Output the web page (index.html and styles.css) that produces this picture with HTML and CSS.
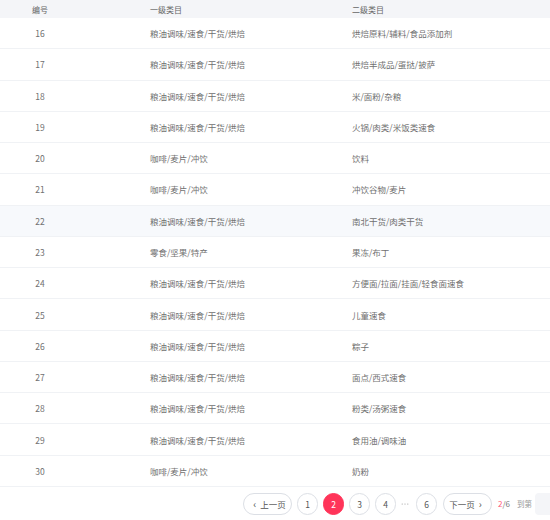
FILE: index.html
```html
<!DOCTYPE html>
<html>
<head>
<meta charset="utf-8">
<link rel="stylesheet" href="styles.css">
</head>
<body>
<div class="table">
  <div class="row head"><div class="c1">编号</div><div class="c2">一级类目</div><div class="c3">二级类目</div></div>
  <div class="row"><div class="c1">16</div><div class="c2">粮油调味/速食/干货/烘焙</div><div class="c3">烘焙原料/辅料/食品添加剂</div></div>
  <div class="row"><div class="c1">17</div><div class="c2">粮油调味/速食/干货/烘焙</div><div class="c3">烘焙半成品/蛋挞/披萨</div></div>
  <div class="row"><div class="c1">18</div><div class="c2">粮油调味/速食/干货/烘焙</div><div class="c3">米/面粉/杂粮</div></div>
  <div class="row"><div class="c1">19</div><div class="c2">粮油调味/速食/干货/烘焙</div><div class="c3">火锅/肉类/米饭类速食</div></div>
  <div class="row"><div class="c1">20</div><div class="c2">咖啡/麦片/冲饮</div><div class="c3">饮料</div></div>
  <div class="row"><div class="c1">21</div><div class="c2">咖啡/麦片/冲饮</div><div class="c3">冲饮谷物/麦片</div></div>
  <div class="row hl"><div class="c1">22</div><div class="c2">粮油调味/速食/干货/烘焙</div><div class="c3">南北干货/肉类干货</div></div>
  <div class="row"><div class="c1">23</div><div class="c2">零食/坚果/特产</div><div class="c3">果冻/布丁</div></div>
  <div class="row"><div class="c1">24</div><div class="c2">粮油调味/速食/干货/烘焙</div><div class="c3">方便面/拉面/挂面/轻食面速食</div></div>
  <div class="row"><div class="c1">25</div><div class="c2">粮油调味/速食/干货/烘焙</div><div class="c3">儿童速食</div></div>
  <div class="row"><div class="c1">26</div><div class="c2">粮油调味/速食/干货/烘焙</div><div class="c3">粽子</div></div>
  <div class="row"><div class="c1">27</div><div class="c2">粮油调味/速食/干货/烘焙</div><div class="c3">面点/西式速食</div></div>
  <div class="row"><div class="c1">28</div><div class="c2">粮油调味/速食/干货/烘焙</div><div class="c3">粉类/汤粥速食</div></div>
  <div class="row"><div class="c1">29</div><div class="c2">粮油调味/速食/干货/烘焙</div><div class="c3">食用油/调味油</div></div>
  <div class="row"><div class="c1">30</div><div class="c2">咖啡/麦片/冲饮</div><div class="c3">奶粉</div></div>
</div>
<div class="pager">
  <div class="btn wide"><span class="arr">‹</span>上一页</div>
  <div class="btn num">1</div>
  <div class="btn num active">2</div>
  <div class="btn num">3</div>
  <div class="btn num">4</div>
  <div class="dots"><svg width="8" height="4" viewBox="0 0 8 4"><circle cx="1.2" cy="2" r="0.6" fill="#999"/><circle cx="4" cy="2" r="0.6" fill="#999"/><circle cx="6.8" cy="2" r="0.6" fill="#999"/></svg></div>
  <div class="btn num">6</div>
  <div class="btn wide">下一页<span class="arr">›</span></div>
  <div class="count"><span class="cur">2</span>/6</div>
  <div class="goto">到第</div>
  <div class="input"></div>
</div>
</body>
</html>
```
FILE: styles.css
```css
html, body {
  margin: 0;
  padding: 0;
  background: #fff;
  width: 550px;
  height: 520px;
  overflow: hidden;
  font-family: "Noto Sans CJK SC", "Noto Sans", sans-serif;
  color: #707070;
}
.table {
  width: 550px;
}
.row {
  display: grid;
  grid-template-columns: 80px 272px 198px;
  height: 31.27px;
  align-items: center;
  font-size: 8.5px;
  border-bottom: 1px solid #f0f2f5;
  box-sizing: border-box;
}
.row.head {
  height: 18px;
  background: #f4f5f8;
  border-bottom: none;
  font-size: 8px;
  color: #666;
}
.row.hl {
  background: #f7f9fc;
}
.c1 {
  text-align: center;
}
.c2 {
  padding-left: 70px;
}
.pager {
  display: flex;
  align-items: center;
  padding: 6px 0 0 243px;
  height: 22px;
  font-size: 8.5px;
  color: #555;
  white-space: nowrap;
}
.btn {
  box-sizing: border-box;
  height: 22px;
  border: 1px solid #dcdfe5;
  border-radius: 11px;
  display: flex;
  align-items: center;
  justify-content: center;
  flex: none;
}
.wide {
  width: 49px;
}
.num {
  width: 21px;
  margin-left: 5px;
}
.num + .wide {
  margin-left: 6px;
}
.active {
  background: #ff3459;
  border-color: #ff3459;
  color: #fff;
}
.arr {
  font-size: 10px;
  margin: 0 4px;
  line-height: 1;
}
.dots {
  width: 8px;
  height: 4px;
  margin-left: 5px;
  display: flex;
  flex: none;
}
.dots + .btn {
  margin-left: 7px;
}
.count {
  margin-left: 6px;
  color: #777;
  font-size: 8px;
}
.cur {
  color: #ff5a78;
}
.goto {
  margin-left: 7px;
  color: #999;
  font-size: 7.5px;
}
.input {
  margin-left: 3px;
  width: 40px;
  height: 22px;
  border-radius: 4px;
  background: #f4f5f8;
  flex: none;
}
```
